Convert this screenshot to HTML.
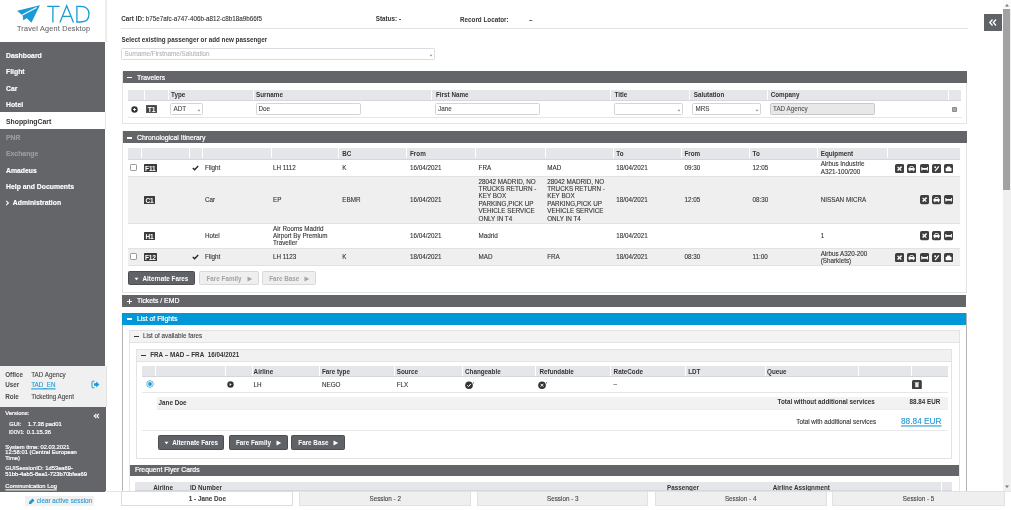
<!DOCTYPE html>
<html><head><meta charset="utf-8">
<style>
*{box-sizing:border-box;margin:0;padding:0}
html,body{width:1011px;height:510px;overflow:hidden;background:#fff}
body{position:relative;font-family:"Liberation Sans",sans-serif;color:#333;font-size:6.3px;-webkit-text-stroke:0.1px currentColor}
.b,b,.tht,.btnd,.btnl,.badge{-webkit-text-stroke:0}
.a{position:absolute}
.t{position:absolute;white-space:nowrap;line-height:8px;font-size:6.3px}
.b{font-weight:bold}
/* sidebar */
#nav{left:0;top:42px;width:105.3px;height:324px;background:#636569}
.nv{position:absolute;left:6px;white-space:nowrap;line-height:8px;font-size:6.85px;font-weight:bold;color:#fff;-webkit-text-stroke:0.15px currentColor}
#sbline{left:105px;top:0;width:2px;height:42px;background:#ececec}

.hdr{position:absolute;background:#636569;height:11.7px}
.ht{transform:scaleY(1.12);transform-origin:0 2px}
.ht{position:absolute;white-space:nowrap;line-height:8px;font-size:6.85px;color:#fff;-webkit-text-stroke:0.2px #fff}
.th{position:absolute;background:#e4e6e9;border-bottom:1px solid #d5d7da}
.tht{position:absolute;white-space:nowrap;line-height:8px;font-size:6.3px;font-weight:bold;color:#333}
.inp{position:absolute;border:1px solid #d4d4d4;border-radius:1.5px;background:#fff}
.badge{position:absolute;background:#3b3b3b;color:#fff;font-weight:bold;font-size:6.5px;display:flex;align-items:center;justify-content:center;border-radius:0.5px;letter-spacing:-0.1px;padding-top:1.2px}
.ic{position:absolute;width:9.2px;height:9.2px;background:#3e3e3e;border-radius:2px}
.btnd{position:absolute;background:#5f6266;border:1px solid #4c4e51;border-radius:1.5px;color:#fff;font-weight:bold;font-size:6.3px;line-height:12px;white-space:nowrap}
.btnl{position:absolute;background:#efefef;border:1px solid #d8d8d8;border-radius:1.5px;color:#a3a3a3;font-weight:bold;font-size:6.3px;line-height:12px;white-space:nowrap}
.tab{position:absolute;top:491px;height:15.3px;background:#efefef;border:1px solid #e2e2e2;font-size:6.3px;line-height:13px;text-align:center;color:#444}
.wk{-webkit-text-stroke:0.2px #fff}
.t,.tht{transform:scaleY(1.07);transform-origin:0 1.8px}
</style></head><body style="will-change:transform">

<!-- ============ SIDEBAR ============ -->
<div class="a" style="left:0;top:0;width:105px;height:42px;background:#fff"></div>
<svg class="a" style="left:14px;top:2px" width="80" height="24" viewBox="0 0 80 24">
  <path d="M3.1 8.7 L25.9 3.3 L17.4 20.7 L12.9 16.2 L9.2 18.3 L8.7 13.4 Z" fill="#1a9ad6"/>
  <path d="M8.4 13.1 L22.6 5.6" stroke="#fff" stroke-width="1.1"/>
</svg>
<svg class="a" style="left:0;top:0" width="100" height="28" viewBox="0 0 100 28" fill="none" stroke="#1a9ad6" stroke-width="1.3">
  <path d="M47.2 6.3 H59.6 M52.9 6.3 V22.4"/>
  <path d="M59.9 22.4 L66.7 5.8 L73.5 22.4 M62.2 16.3 H71"/>
  <path d="M76.9 6.3 H80.5 C86 6.3 89 9.5 89 14.3 C89 19 86 22 80.5 22 H76.9 Z"/>
</svg>
<div class="t" style="left:17px;top:25px;font-size:7.2px;line-height:8px;color:#6a6a6a;letter-spacing:0.24px">Travel Agent Desktop</div>

<div id="nav" class="a"></div>
<div class="nv" style="top:52.0px">Dashboard</div>
<div class="nv" style="top:68.2px">Flight</div>
<div class="nv" style="top:84.5px">Car</div>
<div class="nv" style="top:100.9px">Hotel</div>
<div class="a" style="left:0;top:112.3px;width:106.3px;height:16.8px;background:#fff;border-right:1px solid #e6e6e6"></div>
<div class="nv" style="top:117.5px;color:#333;-webkit-text-stroke:0">ShoppingCart</div>
<div class="nv" style="top:133.5px;color:#9c9ea1">PNR</div>
<div class="nv" style="top:150.0px;color:#9c9ea1">Exchange</div>
<div class="nv" style="top:166.5px">Amadeus</div>
<div class="nv" style="top:182.5px">Help and Documents</div>
<div class="nv" style="top:198.8px;left:12.8px">Administration</div><svg class="a" style="left:5px;top:199.5px" width="5" height="6" viewBox="0 0 5 6"><path d="M1.2 0.9 L3.4 3 L1.2 5.1" stroke="#fff" stroke-width="1.1" fill="none"/></svg>

<div class="a" style="left:0;top:366px;width:107px;height:41px;background:#f0f0f0;border-right:1.6px solid #e2e2e2"></div>
<div class="t b" style="left:5.2px;top:370.6px;color:#4a4a4a">Office</div>
<div class="t" style="left:31.2px;top:370.6px;color:#444">TAD Agency</div>
<div class="t b" style="left:5.2px;top:381.1px;color:#4a4a4a">User</div>
<div class="t" style="left:31.2px;top:381.1px;color:#1a9ad6;text-decoration:underline;text-decoration-thickness:0.6px">TAD_EN</div>
<svg class="a" style="left:91px;top:380px" width="9" height="9" viewBox="0 0 9 9">
  <path d="M3.5 1.2 H1.8 Q1 1.2 1 2 V7 Q1 7.8 1.8 7.8 H3.5" stroke="#1a9ad6" stroke-width="1" fill="none"/>
  <path d="M3 3.3 H5.2 V1.6 L8.4 4.5 L5.2 7.4 V5.7 H3 Z" fill="#1a9ad6"/>
</svg>
<div class="t b" style="left:5.2px;top:393px;color:#4a4a4a">Role</div>
<div class="t" style="left:31.2px;top:393px;color:#444">Ticketing Agent</div>

<div class="a" style="left:0;top:407px;width:105.5px;height:84.5px;background:#636569"></div>
<div class="t" style="left:5.3px;top:409px;font-size:5.8px;color:#fff;-webkit-text-stroke:0.2px #fff">Versions:</div>
<svg class="a" style="left:92.5px;top:413px" width="7" height="6" viewBox="0 0 7 6" fill="none" stroke="#fff" stroke-width="1.1"><path d="M3.4 0.8 L1.2 3 L3.4 5.2 M6 0.8 L3.8 3 L6 5.2"/></svg>
<div class="t" style="left:9.2px;top:419.5px;font-size:5.8px;color:#fff;-webkit-text-stroke:0.2px #fff">GUI:</div>
<div class="t" style="left:27.8px;top:419.5px;font-size:5.8px;color:#fff;-webkit-text-stroke:0.2px #fff">1.7.38 pad01</div>
<div class="t" style="left:9.2px;top:428.4px;font-size:5.8px;color:#fff;-webkit-text-stroke:0.2px #fff;transform:scaleX(0.81);transform-origin:0 0">IDOV1:</div>
<div class="t" style="left:26.7px;top:428.4px;font-size:5.8px;color:#fff;-webkit-text-stroke:0.2px #fff">0.1.15.36</div>
<div class="a" style="left:5.3px;top:444.7px;font-size:5.8px;line-height:5.8px;color:#fff;-webkit-text-stroke:0.2px #fff;width:90px">System time: 02.03.2021<br>12:58:01 (Central European<br>Time)</div>
<div class="a" style="left:5.3px;top:464.6px;font-size:5.8px;line-height:6.2px;color:#fff;-webkit-text-stroke:0.2px #fff;width:95px">GUISessionID: 1d53ea69-<br>51bb-4ab5-8ea1-723b70bfea69</div>
<div class="t" style="left:5.3px;top:481.8px;font-size:5.8px;color:#fff;-webkit-text-stroke:0.2px #fff;text-decoration:underline;text-decoration-thickness:0.6px">Communication Log</div>

<div class="a" style="left:25px;top:496px;width:69px;height:10px;background:#f1f1f1"></div>
<svg class="a" style="left:28px;top:497.5px" width="7" height="7" viewBox="0 0 7 7">
  <path d="M1 6 L3 6 L6.5 2.5 L4.5 0.5 L1 4 Z" fill="#1a9ad6"/>
</svg>
<div class="t" style="left:36.8px;top:497px;font-size:6.35px;color:#2a9ad2">clear active session</div>

<div id="sbline" class="a"></div>


<!-- ============ MAIN HEADER ============ -->
<div class="t" style="left:121.3px;top:15px"><b>Cart ID:</b> b75e7afc-a747-406b-a812-c8b18a9b66f5</div>
<div class="t b" style="left:375.8px;top:15px">Status: -</div>
<div class="t b" style="left:460px;top:16.3px">Record Locator:</div>
<div class="t b" style="left:529px;top:16.3px">–</div>
<div class="a" style="left:121px;top:28px;width:847px;height:1px;background:#e3e3e3"></div>
<div class="t b" style="left:121.5px;top:35.6px">Select existing passenger or add new passenger</div>
<div class="inp" style="left:121px;top:48.4px;width:314px;height:11.3px;border-color:#d9dde2"></div>
<div class="t" style="left:124.5px;top:50px;color:#b5b5b5">Surname/Firstname/Salutation</div>
<svg class="a" style="left:429.2px;top:54.0px" width="4" height="3" viewBox="0 0 4 3"><path d="M0.6 0.8 H3.4 L2 2.4 Z" fill="#8a8a8a"/></svg>

<!-- collapse button + scrollbar -->
<div class="a" style="left:984px;top:14px;width:18px;height:17px;background:#5f6266"></div>
<svg class="a" style="left:984px;top:14px" width="18" height="17" viewBox="0 0 18 17" fill="none" stroke="#fff" stroke-width="1.3">
  <path d="M8.5 5.5 L5.8 8.5 L8.5 11.5 M12 5.5 L9.3 8.5 L12 11.5"/>
</svg>
<!-- ============ TRAVELERS ============ -->
<div class="a" style="left:122px;top:71.5px;width:844.5px;height:52.5px;border:1px solid #e4e4e4;border-top:none"></div>
<div class="hdr" style="left:122.5px;top:71.2px;width:844px;height:11.6px"></div>
<div class="a" style="left:126.7px;top:76.6px;width:5.6px;height:1.9px;background:#fff"></div>
<div class="ht" style="left:137px;top:73.5px">Travelers</div>
<div class="th" style="left:128.4px;top:90px;width:832.4px;height:10.6px"></div>
<div class="a" style="left:144px;top:90px;width:1px;height:10px;background:#fff"></div>
<div class="a" style="left:168px;top:90px;width:1px;height:10px;background:#fff"></div>
<div class="a" style="left:252.6px;top:90px;width:1px;height:10px;background:#fff"></div>
<div class="a" style="left:431px;top:90px;width:1px;height:10px;background:#fff"></div>
<div class="a" style="left:610px;top:90px;width:1px;height:10px;background:#fff"></div>
<div class="a" style="left:689px;top:90px;width:1px;height:10px;background:#fff"></div>
<div class="a" style="left:766.5px;top:90px;width:1px;height:10px;background:#fff"></div>
<div class="a" style="left:947.7px;top:90px;width:1px;height:10px;background:#fff"></div>
<div class="tht" style="left:171px;top:91.3px">Type</div>
<div class="tht" style="left:256px;top:91.3px">Surname</div>
<div class="tht" style="left:436px;top:91.3px">First Name</div>
<div class="tht" style="left:614.5px;top:91.3px">Title</div>
<div class="tht" style="left:693.8px;top:91.3px">Salutation</div>
<div class="tht" style="left:770.7px;top:91.3px">Company</div>
<div class="a" style="left:128.4px;top:116.8px;width:833.5px;height:1px;background:#e6e6e6"></div>
<svg class="a" style="left:130.5px;top:105.8px" width="7" height="7" viewBox="0 0 7 7"><circle cx="3.5" cy="3.5" r="3.2" fill="#333"/><path d="M2 3.5 H5 M3.5 2 V5" stroke="#fff" stroke-width="0.9"/></svg>
<div class="badge" style="left:146.2px;top:105.2px;width:10.8px;height:7.6px;font-size:6.8px;border:0.8px solid #555;background:#444">T1</div>
<div class="inp" style="left:170.4px;top:103.2px;width:32.4px;height:11.5px"></div>
<div class="t" style="left:173.5px;top:104.8px;color:#444">ADT</div>
<svg class="a" style="left:196.9px;top:109.1px" width="4" height="3" viewBox="0 0 4 3"><path d="M0.6 0.8 H3.4 L2 2.4 Z" fill="#8a8a8a"/></svg>
<div class="inp" style="left:255.5px;top:103.2px;width:105px;height:11.5px"></div>
<div class="t" style="left:258.5px;top:104.8px;color:#444">Doe</div>
<div class="inp" style="left:434.9px;top:103.2px;width:105.5px;height:11.5px"></div>
<div class="t" style="left:438px;top:104.8px;color:#444">Jane</div>
<div class="inp" style="left:613.6px;top:103.2px;width:69.4px;height:11.5px"></div>
<svg class="a" style="left:677.4px;top:108.9px" width="4" height="3" viewBox="0 0 4 3"><path d="M0.6 0.8 H3.4 L2 2.4 Z" fill="#8a8a8a"/></svg>
<div class="inp" style="left:692.4px;top:103.2px;width:68.9px;height:11.5px"></div>
<div class="t" style="left:695.5px;top:104.8px;color:#444">MRS</div>
<svg class="a" style="left:755.0px;top:108.9px" width="4" height="3" viewBox="0 0 4 3"><path d="M0.6 0.8 H3.4 L2 2.4 Z" fill="#8a8a8a"/></svg>
<div class="inp" style="left:769.7px;top:103.2px;width:105.8px;height:11.5px;background:#e8e8e8;border-color:#c9c9c9"></div>
<div class="t" style="left:773px;top:104.8px;color:#555">TAD Agency</div>
<div class="a" style="left:952px;top:106.6px;width:5.2px;height:5.6px;background:#8a8a8a;border-radius:1px"></div><div class="a" style="left:953.4px;top:108.2px;width:2.4px;height:2.8px;background:#a8a8a8"></div>


<!-- ============ ITINERARY ============ -->
<div class="a" style="left:122px;top:131.3px;width:845px;height:162px;border:1px solid #e4e4e4;border-top:none"></div>
<div class="hdr" style="left:122.5px;top:131.4px;width:844.5px;height:11.6px"></div>
<div class="a" style="left:126.7px;top:136.8px;width:5.6px;height:1.9px;background:#fff"></div>
<div class="ht" style="left:137px;top:133.5px">Chronological Itinerary</div>
<div class="th" style="left:128.2px;top:148.1px;width:832.2px;height:11.6px"></div>
<div class="a" style="left:141.0px;top:148.1px;width:1px;height:10.4px;background:#fff"></div><div class="a" style="left:188.6px;top:148.1px;width:1px;height:10.4px;background:#fff"></div><div class="a" style="left:202.0px;top:148.1px;width:1px;height:10.4px;background:#fff"></div><div class="a" style="left:271.0px;top:148.1px;width:1px;height:10.4px;background:#fff"></div><div class="a" style="left:337.8px;top:148.1px;width:1px;height:10.4px;background:#fff"></div><div class="a" style="left:406.3px;top:148.1px;width:1px;height:10.4px;background:#fff"></div><div class="a" style="left:474.9px;top:148.1px;width:1px;height:10.4px;background:#fff"></div><div class="a" style="left:544.7px;top:148.1px;width:1px;height:10.4px;background:#fff"></div><div class="a" style="left:612.8px;top:148.1px;width:1px;height:10.4px;background:#fff"></div><div class="a" style="left:680.9px;top:148.1px;width:1px;height:10.4px;background:#fff"></div><div class="a" style="left:749.0px;top:148.1px;width:1px;height:10.4px;background:#fff"></div><div class="a" style="left:817.1px;top:148.1px;width:1px;height:10.4px;background:#fff"></div><div class="a" style="left:887.3px;top:148.1px;width:1px;height:10.4px;background:#fff"></div>
<div class="tht" style="left:342.3px;top:149.8px">BC</div>
<div class="tht" style="left:410px;top:149.8px">From</div>
<div class="tht" style="left:616.3px;top:149.8px">To</div>
<div class="tht" style="left:684.4px;top:149.8px">From</div>
<div class="tht" style="left:752.5px;top:149.8px">To</div>
<div class="tht" style="left:820.7px;top:149.8px">Equipment</div>

<!-- rows -->
<div class="a" style="left:128.2px;top:176.2px;width:832.2px;height:1px;background:#e2e2e2"></div>
<div class="a" style="left:128.2px;top:177.2px;width:832.2px;height:46px;background:#efefef"></div>
<div class="a" style="left:128.2px;top:222.6px;width:832.2px;height:1px;background:#e2e2e2"></div>
<div class="a" style="left:128.2px;top:248.2px;width:832.2px;height:1px;background:#e2e2e2"></div>
<div class="a" style="left:128.2px;top:249.2px;width:832.2px;height:16.3px;background:#efefef"></div>
<div class="a" style="left:128.2px;top:265.3px;width:832.2px;height:1px;background:#e2e2e2"></div>

<!-- F11 -->
<div class="a" style="left:130.1px;top:163.7px;width:6.8px;height:7px;border:1px solid #9a9a9a;border-radius:1.2px;background:#fff"></div>
<div class="badge" style="left:143.7px;top:164.1px;width:13.3px;height:7.9px;line-height:7.9px">F11</div>
<svg class="a" style="left:191.5px;top:164.5px" width="7" height="6" viewBox="0 0 7 6"><path d="M0.8 3 L2.6 4.8 L6.2 1" stroke="#222" stroke-width="1.3" fill="none"/></svg>
<div class="t" style="left:204.9px;top:163.6px">Flight</div>
<div class="t" style="left:273px;top:163.6px">LH 1112</div>
<div class="t" style="left:342.3px;top:163.6px">K</div>
<div class="t" style="left:410px;top:163.6px">16/04/2021</div>
<div class="t" style="left:478.6px;top:163.6px">FRA</div>
<div class="t" style="left:547.2px;top:163.6px">MAD</div>
<div class="t" style="left:616.3px;top:163.6px">18/04/2021</div>
<div class="t" style="left:684.4px;top:163.6px">09:30</div>
<div class="t" style="left:752.5px;top:163.6px">12:05</div>
<div class="a" style="left:820.7px;top:160.2px;font-size:6.3px;line-height:7.5px;white-space:nowrap">Airbus Industrie<br>A321-100/200</div>

<!-- C1 -->
<div class="badge" style="left:143.7px;top:196px;width:11.5px;height:7.9px;line-height:7.9px">C1</div>
<div class="t" style="left:204.9px;top:196px">Car</div>
<div class="t" style="left:273px;top:196px">EP</div>
<div class="t" style="left:342.3px;top:196px">EBMR</div>
<div class="t" style="left:410px;top:196px">16/04/2021</div>
<div class="a" style="left:478.6px;top:177.6px;font-size:6.3px;line-height:7.4px;white-space:nowrap">28042 MADRID, NO<br>TRUCKS RETURN -<br>KEY BOX<br>PARKING,PICK UP<br>VEHICLE SERVICE<br>ONLY IN T4</div>
<div class="a" style="left:547.2px;top:177.6px;font-size:6.3px;line-height:7.4px;white-space:nowrap">28042 MADRID, NO<br>TRUCKS RETURN -<br>KEY BOX<br>PARKING,PICK UP<br>VEHICLE SERVICE<br>ONLY IN T4</div>
<div class="t" style="left:616.3px;top:196px">18/04/2021</div>
<div class="t" style="left:684.4px;top:196px">12:05</div>
<div class="t" style="left:752.5px;top:196px">08:30</div>
<div class="t" style="left:820.7px;top:196px">NISSAN MICRA</div>

<!-- H1 -->
<div class="badge" style="left:143.7px;top:232.2px;width:11.5px;height:7.9px;line-height:7.9px">H1</div>
<div class="t" style="left:204.9px;top:232.2px">Hotel</div>
<div class="a" style="left:273px;top:224.6px;font-size:6.3px;line-height:7.4px;white-space:nowrap">Air Rooms Madrid<br>Airport By Premium<br>Traveller</div>
<div class="t" style="left:410px;top:232.2px">16/04/2021</div>
<div class="t" style="left:478.6px;top:232.2px">Madrid</div>
<div class="t" style="left:616.3px;top:232.2px">18/04/2021</div>
<div class="t" style="left:820.7px;top:232.2px">1</div>

<!-- F12 -->
<div class="a" style="left:130.1px;top:253.3px;width:6.8px;height:7px;border:1px solid #9a9a9a;border-radius:1.2px;background:#fff"></div>
<div class="badge" style="left:143.7px;top:253.2px;width:13.3px;height:7.9px;line-height:7.9px">F12</div>
<svg class="a" style="left:191.5px;top:254px" width="7" height="6" viewBox="0 0 7 6"><path d="M0.8 3 L2.6 4.8 L6.2 1" stroke="#222" stroke-width="1.3" fill="none"/></svg>
<div class="t" style="left:204.9px;top:253.1px">Flight</div>
<div class="t" style="left:273px;top:253.1px">LH 1123</div>
<div class="t" style="left:342.3px;top:253.1px">K</div>
<div class="t" style="left:410px;top:253.1px">18/04/2021</div>
<div class="t" style="left:478.6px;top:253.1px">MAD</div>
<div class="t" style="left:547.2px;top:253.1px">FRA</div>
<div class="t" style="left:616.3px;top:253.1px">18/04/2021</div>
<div class="t" style="left:684.4px;top:253.1px">08:30</div>
<div class="t" style="left:752.5px;top:253.1px">11:00</div>
<div class="a" style="left:820.7px;top:249.6px;font-size:6.3px;line-height:7.5px;white-space:nowrap">Airbus A320-200<br>(Sharklets)</div>

<svg class="a" style="left:895.2px;top:163.5px" width="9.2" height="9.2" viewBox="0 0 9.2 9.2"><rect width="9.2" height="9.2" rx="1.8" fill="#3e3e3e"/><path d="M2.6 6.6 L6.6 2.6" stroke="#fff" stroke-width="1.5"/><path d="M2.6 2.9 L6.3 6.6" stroke="#fff" stroke-width="1.3"/></svg><svg class="a" style="left:907.3px;top:163.5px" width="9.2" height="9.2" viewBox="0 0 9.2 9.2"><rect width="9.2" height="9.2" rx="1.8" fill="#3e3e3e"/><path d="M3.1 2.3 H6.1 L7 4.1 H7.7 V6.3 H6.9 V7.2 H5.9 V6.3 H3.3 V7.2 H2.3 V6.3 H1.5 V4.1 H2.2 Z" fill="#fff"/><path d="M3.6 3 H5.6 L6 4 H3.2 Z" fill="#3e3e3e"/></svg><svg class="a" style="left:919.6px;top:163.5px" width="9.2" height="9.2" viewBox="0 0 9.2 9.2"><rect width="9.2" height="9.2" rx="1.8" fill="#3e3e3e"/><path d="M1.3 2.9 H2.3 V3.9 H6.9 V3.1 H7.9 V6.5 H6.9 V5.7 H2.3 V6.5 H1.3 Z" fill="#fff"/></svg><svg class="a" style="left:931.8px;top:163.5px" width="9.2" height="9.2" viewBox="0 0 9.2 9.2"><rect width="9.2" height="9.2" rx="1.8" fill="#3e3e3e"/><path d="M3.1 7.2 L6.9 2.3" stroke="#fff" stroke-width="1.3"/><circle cx="3.2" cy="3.3" r="1" fill="#fff"/></svg><svg class="a" style="left:943.9px;top:163.5px" width="9.2" height="9.2" viewBox="0 0 9.2 9.2"><rect width="9.2" height="9.2" rx="1.8" fill="#3e3e3e"/><path d="M1.7 4 H2.5 L3.3 2.5 H5.9 L6.7 4 H7.5 V7.2 H1.7 Z" fill="#fff"/></svg><svg class="a" style="left:919.6px;top:195.4px" width="9.2" height="9.2" viewBox="0 0 9.2 9.2"><rect width="9.2" height="9.2" rx="1.8" fill="#3e3e3e"/><path d="M2.6 6.6 L6.6 2.6" stroke="#fff" stroke-width="1.5"/><path d="M2.6 2.9 L6.3 6.6" stroke="#fff" stroke-width="1.3"/></svg><svg class="a" style="left:931.8px;top:195.4px" width="9.2" height="9.2" viewBox="0 0 9.2 9.2"><rect width="9.2" height="9.2" rx="1.8" fill="#3e3e3e"/><path d="M3.1 2.3 H6.1 L7 4.1 H7.7 V6.3 H6.9 V7.2 H5.9 V6.3 H3.3 V7.2 H2.3 V6.3 H1.5 V4.1 H2.2 Z" fill="#fff"/><path d="M3.6 3 H5.6 L6 4 H3.2 Z" fill="#3e3e3e"/></svg><svg class="a" style="left:943.9px;top:195.4px" width="9.2" height="9.2" viewBox="0 0 9.2 9.2"><rect width="9.2" height="9.2" rx="1.8" fill="#3e3e3e"/><path d="M1.3 2.9 H2.3 V3.9 H6.9 V3.1 H7.9 V6.5 H6.9 V5.7 H2.3 V6.5 H1.3 Z" fill="#fff"/></svg><svg class="a" style="left:919.6px;top:231.4px" width="9.2" height="9.2" viewBox="0 0 9.2 9.2"><rect width="9.2" height="9.2" rx="1.8" fill="#3e3e3e"/><path d="M2.6 6.6 L6.6 2.6" stroke="#fff" stroke-width="1.5"/><path d="M2.6 2.9 L6.3 6.6" stroke="#fff" stroke-width="1.3"/></svg><svg class="a" style="left:931.8px;top:231.4px" width="9.2" height="9.2" viewBox="0 0 9.2 9.2"><rect width="9.2" height="9.2" rx="1.8" fill="#3e3e3e"/><path d="M3.1 2.3 H6.1 L7 4.1 H7.7 V6.3 H6.9 V7.2 H5.9 V6.3 H3.3 V7.2 H2.3 V6.3 H1.5 V4.1 H2.2 Z" fill="#fff"/><path d="M3.6 3 H5.6 L6 4 H3.2 Z" fill="#3e3e3e"/></svg><svg class="a" style="left:943.9px;top:231.4px" width="9.2" height="9.2" viewBox="0 0 9.2 9.2"><rect width="9.2" height="9.2" rx="1.8" fill="#3e3e3e"/><path d="M1.3 2.9 H2.3 V3.9 H6.9 V3.1 H7.9 V6.5 H6.9 V5.7 H2.3 V6.5 H1.3 Z" fill="#fff"/></svg><svg class="a" style="left:895.2px;top:252.6px" width="9.2" height="9.2" viewBox="0 0 9.2 9.2"><rect width="9.2" height="9.2" rx="1.8" fill="#3e3e3e"/><path d="M2.6 6.6 L6.6 2.6" stroke="#fff" stroke-width="1.5"/><path d="M2.6 2.9 L6.3 6.6" stroke="#fff" stroke-width="1.3"/></svg><svg class="a" style="left:907.3px;top:252.6px" width="9.2" height="9.2" viewBox="0 0 9.2 9.2"><rect width="9.2" height="9.2" rx="1.8" fill="#3e3e3e"/><path d="M3.1 2.3 H6.1 L7 4.1 H7.7 V6.3 H6.9 V7.2 H5.9 V6.3 H3.3 V7.2 H2.3 V6.3 H1.5 V4.1 H2.2 Z" fill="#fff"/><path d="M3.6 3 H5.6 L6 4 H3.2 Z" fill="#3e3e3e"/></svg><svg class="a" style="left:919.6px;top:252.6px" width="9.2" height="9.2" viewBox="0 0 9.2 9.2"><rect width="9.2" height="9.2" rx="1.8" fill="#3e3e3e"/><path d="M1.3 2.9 H2.3 V3.9 H6.9 V3.1 H7.9 V6.5 H6.9 V5.7 H2.3 V6.5 H1.3 Z" fill="#fff"/></svg><svg class="a" style="left:931.8px;top:252.6px" width="9.2" height="9.2" viewBox="0 0 9.2 9.2"><rect width="9.2" height="9.2" rx="1.8" fill="#3e3e3e"/><path d="M3.1 7.2 L6.9 2.3" stroke="#fff" stroke-width="1.3"/><circle cx="3.2" cy="3.3" r="1" fill="#fff"/></svg><svg class="a" style="left:943.9px;top:252.6px" width="9.2" height="9.2" viewBox="0 0 9.2 9.2"><rect width="9.2" height="9.2" rx="1.8" fill="#3e3e3e"/><path d="M1.7 4 H2.5 L3.3 2.5 H5.9 L6.7 4 H7.5 V7.2 H1.7 Z" fill="#fff"/></svg>

<!-- buttons -->
<div class="btnd" style="left:128px;top:271px;width:66.6px;height:14.2px"><span style="position:absolute;left:13.5px;top:1px">Alternate Fares</span></div>
<svg class="a" style="left:134px;top:276.5px" width="5" height="4" viewBox="0 0 5 4"><path d="M0.5 0.8 H4.5 L2.5 3.2 Z" fill="#fff"/></svg>
<div class="btnl" style="left:199.2px;top:271px;width:59.7px;height:14.2px"><span style="position:absolute;left:6.3px;top:1px">Fare Family</span></div>
<svg class="a" style="left:246.5px;top:275.5px" width="6" height="6" viewBox="0 0 6 6"><path d="M0.5 0.5 L5.2 3 L0.5 5.5 Z" fill="#a3a3a3"/></svg>
<div class="btnl" style="left:261.9px;top:271px;width:54.6px;height:14.2px"><span style="position:absolute;left:6.3px;top:1px">Fare Base</span></div>
<svg class="a" style="left:304px;top:275.5px" width="6" height="6" viewBox="0 0 6 6"><path d="M0.5 0.5 L5.2 3 L0.5 5.5 Z" fill="#a3a3a3"/></svg>

<!-- ============ TICKETS ============ -->
<div class="hdr" style="left:122.4px;top:295.3px;width:844px;height:11.9px"></div>
<div class="a" style="left:126.9px;top:300.5px;width:5.4px;height:1.6px;background:#fff"></div>
<div class="a" style="left:128.8px;top:298.6px;width:1.6px;height:5.4px;background:#fff"></div>
<div class="ht" style="left:137px;top:297.3px">Tickets / EMD</div>


<!-- ============ LIST OF FLIGHTS ============ -->
<div class="a" style="left:122px;top:313.3px;width:844.8px;height:200px;border-left:1px solid #b4b4b4;border-right:1px solid #b4b4b4"></div>
<div class="hdr" style="left:122.4px;top:313.3px;width:844px;height:11.7px;background:#0198d8"></div>
<div class="a" style="left:126.7px;top:318.4px;width:5.6px;height:1.9px;background:#fff"></div>
<div class="ht" style="left:137px;top:315px">List of Flights</div>

<!-- available fares sub-panel -->
<div class="a" style="left:129px;top:329.5px;width:831px;height:200px;border:1px solid #e6e6e6;background:#fff"></div>
<div class="a" style="left:129px;top:329.5px;width:831px;height:13px;background:#f3f3f3;border:1px solid #e3e3e3"></div>
<div class="a" style="left:133.8px;top:335.6px;width:5.3px;height:1.5px;background:#333"></div>
<div class="t" style="left:143px;top:331.6px;color:#444">List of available fares</div>

<!-- FRA-MAD-FRA sub-sub-panel -->
<div class="a" style="left:136.4px;top:349px;width:816px;height:109.5px;border:1px solid #e3e3e3;background:#fff"></div>
<div class="a" style="left:136.4px;top:349px;width:816px;height:12.7px;background:#f1f1f1;border:1px solid #e3e3e3"></div>
<div class="a" style="left:140.7px;top:354.9px;width:5.3px;height:1.5px;background:#333"></div>
<div class="t b" style="left:150.2px;top:351px">FRA – MAD – FRA&nbsp; 16/04/2021</div>

<div class="th" style="left:142.3px;top:366.2px;width:805.4px;height:11.3px"></div>
<div class="a" style="left:155.2px;top:366.2px;width:1px;height:10.3px;background:#fff"></div><div class="a" style="left:224.5px;top:366.2px;width:1px;height:10.3px;background:#fff"></div><div class="a" style="left:251.5px;top:366.2px;width:1px;height:10.3px;background:#fff"></div><div class="a" style="left:318.5px;top:366.2px;width:1px;height:10.3px;background:#fff"></div><div class="a" style="left:393.5px;top:366.2px;width:1px;height:10.3px;background:#fff"></div><div class="a" style="left:462.0px;top:366.2px;width:1px;height:10.3px;background:#fff"></div><div class="a" style="left:535.0px;top:366.2px;width:1px;height:10.3px;background:#fff"></div><div class="a" style="left:610.3px;top:366.2px;width:1px;height:10.3px;background:#fff"></div><div class="a" style="left:685.4px;top:366.2px;width:1px;height:10.3px;background:#fff"></div><div class="a" style="left:764.6px;top:366.2px;width:1px;height:10.3px;background:#fff"></div><div class="a" style="left:858.3px;top:366.2px;width:1px;height:10.3px;background:#fff"></div><div class="a" style="left:910.5px;top:366.2px;width:1px;height:10.3px;background:#fff"></div><div class="tht" style="left:253.6px;top:367.8px">Airline</div>
<div class="tht" style="left:321.9px;top:367.8px">Fare type</div>
<div class="tht" style="left:396.7px;top:367.8px">Source</div>
<div class="tht" style="left:465px;top:367.8px">Changeable</div>
<div class="tht" style="left:539.5px;top:367.8px">Refundable</div>
<div class="tht" style="left:613.6px;top:367.8px">RateCode</div>
<div class="tht" style="left:688.2px;top:367.8px">LDT</div>
<div class="tht" style="left:767px;top:367.8px">Queue</div>

<svg class="a" style="left:145.5px;top:380px" width="8" height="8" viewBox="0 0 8 8"><circle cx="4" cy="4" r="3.3" fill="#fff" stroke="#1a9ad6" stroke-width="0.7"/><circle cx="4" cy="4" r="1.9" fill="#1a9ad6"/></svg>
<svg class="a" style="left:227px;top:380.5px" width="7" height="7" viewBox="0 0 7 7"><circle cx="3.5" cy="3.5" r="3.2" fill="#333"/><path d="M2.7 2 L4.6 3.5 L2.7 5 Z" fill="#fff"/></svg>
<div class="t" style="left:253.6px;top:380.6px">LH</div>
<div class="t" style="left:321.9px;top:380.6px">NEGO</div>
<div class="t" style="left:396.7px;top:380.6px">FLX</div>
<svg class="a" style="left:464.6px;top:381.4px" width="10" height="8.5" viewBox="0 0 10 8.5"><circle cx="4" cy="4.2" r="3.8" fill="#333"/><path d="M2.2 4.3 L3.6 5.6 L5.9 2.9" stroke="#fff" stroke-width="1" fill="none"/><path d="M8.6 1 L8.3 2.6" stroke="#555" stroke-width="0.7"/></svg>
<svg class="a" style="left:538.4px;top:381.4px" width="10" height="8.5" viewBox="0 0 10 8.5"><circle cx="4" cy="4.2" r="3.8" fill="#333"/><path d="M2.6 2.8 L5.4 5.6 M5.4 2.8 L2.6 5.6" stroke="#fff" stroke-width="1" fill="none"/><path d="M8.6 1 L8.3 2.6" stroke="#555" stroke-width="0.7"/></svg>
<div class="t" style="left:613.6px;top:379.5px">–</div>
<svg class="a" style="left:912.3px;top:379.8px" width="9.8" height="9.5" viewBox="0 0 9.8 9.5"><rect width="9.8" height="9.5" rx="1.5" fill="#3e3e3e"/><path d="M3.2 3 H6.6 V7.2 H3.2 Z" fill="#e8e8e8"/><rect x="2.7" y="2" width="4.4" height="0.7" fill="#e8e8e8"/></svg>
<div class="a" style="left:142.3px;top:392px;width:805.4px;height:1px;background:#e6e6e6"></div>

<div class="a" style="left:156.6px;top:396.5px;width:791.1px;height:12.5px;background:#f2f2f2"></div>
<div class="t b" style="left:158.6px;top:398.9px">Jane Doe</div>
<div class="t b" style="left:777.6px;top:398.3px">Total without additional services</div>
<div class="t b" style="left:909.5px;top:398.3px">88.84 EUR</div>
<div class="a" style="left:156.6px;top:408.8px;width:791.1px;height:1px;background:#ececec"></div>
<div class="t" style="left:796.3px;top:417.9px">Total with additional services</div>
<div class="t" style="left:901px;top:416.5px;font-size:8.3px;line-height:9px;color:#2196d3;text-decoration:underline;text-decoration-thickness:0.6px">88.84 EUR</div>
<div class="a" style="left:142.3px;top:430.3px;width:805.4px;height:1px;background:#e9e9e9"></div>

<div class="btnd" style="left:157.7px;top:435.2px;width:66.5px;height:14.6px"><span style="position:absolute;left:13.5px;top:1.2px">Alternate Fares</span></div>
<svg class="a" style="left:163.5px;top:440.8px" width="5" height="4" viewBox="0 0 5 4"><path d="M0.5 0.8 H4.5 L2.5 3.2 Z" fill="#fff"/></svg>
<div class="btnd" style="left:228.6px;top:435.2px;width:59.4px;height:14.6px"><span style="position:absolute;left:6.3px;top:1.2px">Fare Family</span></div>
<svg class="a" style="left:275.5px;top:440px" width="6" height="6" viewBox="0 0 6 6"><path d="M0.5 0.5 L5.2 3 L0.5 5.5 Z" fill="#fff"/></svg>
<div class="btnd" style="left:291px;top:435.2px;width:54.2px;height:14.6px"><span style="position:absolute;left:6.3px;top:1.2px">Fare Base</span></div>
<svg class="a" style="left:332.5px;top:440px" width="6" height="6" viewBox="0 0 6 6"><path d="M0.5 0.5 L5.2 3 L0.5 5.5 Z" fill="#fff"/></svg>

<!-- ============ FREQUENT FLYER ============ -->
<div class="hdr" style="left:130px;top:464.5px;width:829.2px;height:11px"></div>
<div class="ht" style="left:134.9px;top:466px;font-size:6.85px">Frequent Flyer Cards</div>
<div class="th" style="left:135.3px;top:482.3px;width:817.2px;height:9px"></div><div class="a" style="left:941.4px;top:482.3px;width:1px;height:9px;background:#fff"></div>
<div class="tht" style="left:153.3px;top:483.6px">Airline</div>
<div class="tht" style="left:190px;top:483.6px">ID Number</div>
<div class="tht" style="left:667px;top:483.6px">Passenger</div>
<div class="tht" style="left:772.8px;top:483.6px">Airline Assignment</div>

<!-- ============ TABS ============ -->
<div class="a" style="left:1002.5px;top:0;width:8.5px;height:491px;background:#f0f0f0"></div>
<div class="a" style="left:1002.5px;top:0;width:8.5px;height:9px;background:#fafafa"></div>
<div class="a" style="left:1003.3px;top:9px;width:6.8px;height:181px;background:#a2a2a2"></div>
<svg class="a" style="left:1003px;top:2px" width="8" height="6" viewBox="0 0 8 6"><path d="M2 4.5 L4 2 L6 4.5 Z" fill="#777"/></svg>
<svg class="a" style="left:1003px;top:484px" width="8" height="6" viewBox="0 0 8 6"><path d="M2 1.5 L4 4 L6 1.5 Z" fill="#777"/></svg>
<div class="a" style="left:105px;top:491px;width:906px;height:19px;background:#fff;border-top:1px solid #e2e5e9"></div>
<div class="tab" style="left:121.4px;width:172px;background:#fff;border-color:#dcdcdc;font-weight:bold">1 - Jane Doe</div>
<div class="tab" style="left:299px;width:172.4px">Session - 2</div>
<div class="tab" style="left:477.2px;width:171.1px">Session - 3</div>
<div class="tab" style="left:654.6px;width:172.1px">Session - 4</div>
<div class="tab" style="left:832px;width:173px">Session - 5</div>



</body></html>
